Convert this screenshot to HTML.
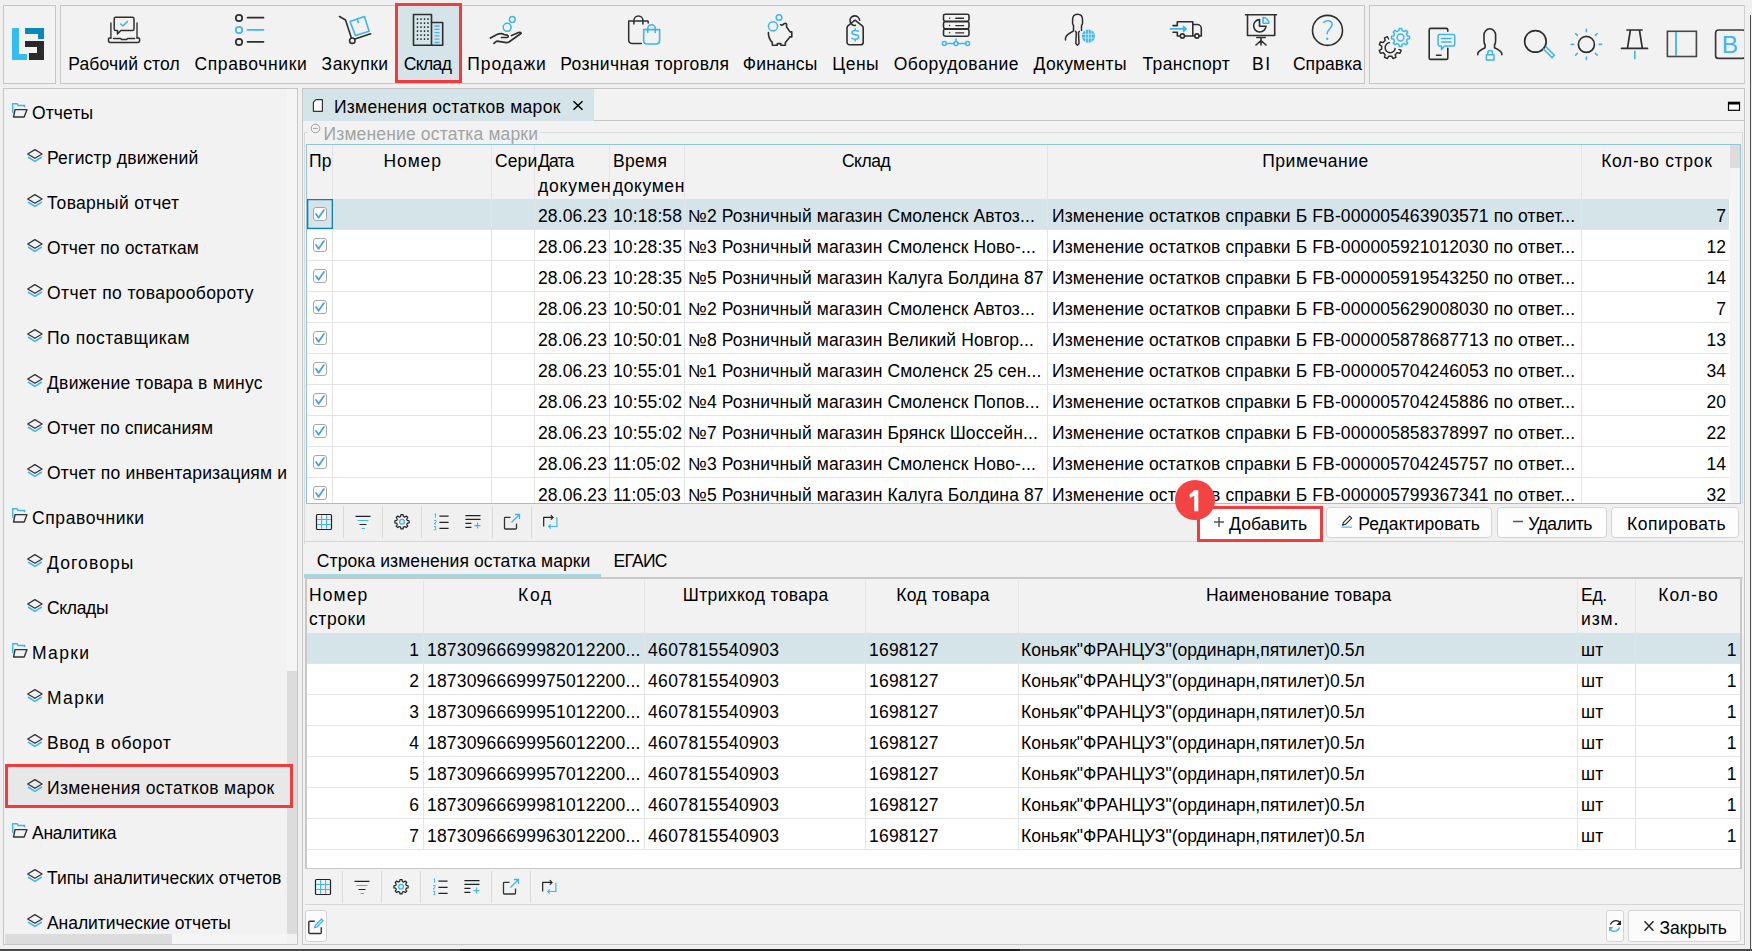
<!DOCTYPE html>
<html><head><meta charset="utf-8"><style>
html,body{margin:0;padding:0;}
body{width:1752px;height:951px;position:relative;overflow:hidden;background:#f0f0f0;font-family:"Liberation Sans",sans-serif;font-size:17.5px;color:#000;line-height:20px;letter-spacing:0.12px;}
.t{position:absolute;white-space:nowrap;line-height:20px;}
.b{position:absolute;}
.cb{width:14px;height:14px;border:1px solid #a6a6a6;border-radius:3px;background:#fff;box-sizing:border-box;}
svg.ic{position:absolute;left:0;top:0;width:1752px;height:951px;pointer-events:none;}
</style></head><body>
<div class="b" style="left:3px;top:5px;width:53px;height:79px;background:#f2f2f2;border:1px solid #c6c6c6;box-sizing:border-box;"></div>
<div class="b" style="left:60px;top:5px;width:1305px;height:79px;background:#f2f2f2;border:1px solid #c6c6c6;box-sizing:border-box;"></div>
<div class="b" style="left:1369px;top:5px;width:376px;height:79px;background:#f2f2f2;border:1px solid #c6c6c6;box-sizing:border-box;"></div>
<div class="b" style="left:395px;top:3px;width:67px;height:80px;background:#d4e4e9;border:3px solid #f03c3c;box-sizing:border-box;"></div>
<div class="t" style="top:53.5px;left:124.1px;width:0;display:flex;justify-content:center;white-space:nowrap;letter-spacing:0.16px;">Рабочий стол</div>
<div class="t" style="top:53.5px;left:250.9px;width:0;display:flex;justify-content:center;white-space:nowrap;letter-spacing:0.63px;">Справочники</div>
<div class="t" style="top:53.5px;left:355.1px;width:0;display:flex;justify-content:center;white-space:nowrap;letter-spacing:0.45px;">Закупки</div>
<div class="t" style="top:53.5px;left:427.5px;width:0;display:flex;justify-content:center;white-space:nowrap;letter-spacing:-0.6px;">Склад</div>
<div class="t" style="top:53.5px;left:507.0px;width:0;display:flex;justify-content:center;white-space:nowrap;letter-spacing:0.92px;">Продажи</div>
<div class="t" style="top:53.5px;left:644.8px;width:0;display:flex;justify-content:center;white-space:nowrap;letter-spacing:0.38px;">Розничная торговля</div>
<div class="t" style="top:53.5px;left:780.1px;width:0;display:flex;justify-content:center;white-space:nowrap;letter-spacing:0.17px;">Финансы</div>
<div class="t" style="top:53.5px;left:855.7px;width:0;display:flex;justify-content:center;white-space:nowrap;letter-spacing:0.53px;">Цены</div>
<div class="t" style="top:53.5px;left:956.3px;width:0;display:flex;justify-content:center;white-space:nowrap;letter-spacing:0.52px;">Оборудование</div>
<div class="t" style="top:53.5px;left:1080.2px;width:0;display:flex;justify-content:center;white-space:nowrap;letter-spacing:0.35px;">Документы</div>
<div class="t" style="top:53.5px;left:1186.3px;width:0;display:flex;justify-content:center;white-space:nowrap;letter-spacing:0.4px;">Транспорт</div>
<div class="t" style="top:53.5px;left:1261.8px;width:0;display:flex;justify-content:center;white-space:nowrap;letter-spacing:1.5px;">BI</div>
<div class="t" style="top:53.5px;left:1327.5px;width:0;display:flex;justify-content:center;white-space:nowrap;letter-spacing:0.08px;">Справка</div>
<div class="b" style="left:3px;top:88px;width:295px;height:857px;background:#f2f2f2;border:1px solid #c6c6c6;box-sizing:border-box;"></div>
<div class="b" style="left:287px;top:89px;width:10px;height:845px;background:#f5f5f5;"></div>
<div class="b" style="left:287px;top:671px;width:10px;height:263px;background:#dcdcdc;"></div>
<div class="b" style="left:4px;top:934px;width:283px;height:10px;background:#f5f5f5;"></div>
<div class="b" style="left:5px;top:934px;width:167px;height:10px;background:#dcdcdc;"></div>
<div class="b" style="left:5px;top:764px;width:288px;height:44px;background:#e8e8e8;border:3px solid #f03c3c;box-sizing:border-box;"></div>
<div class="t" style="top:103.4px;left:32.0px;white-space:nowrap;letter-spacing:0.120px;">Отчеты</div>
<div class="t" style="top:148.4px;left:47.0px;white-space:nowrap;letter-spacing:0.207px;">Регистр движений</div>
<div class="t" style="top:193.4px;left:47.0px;white-space:nowrap;letter-spacing:0.297px;">Товарный отчет</div>
<div class="t" style="top:238.4px;left:47.0px;white-space:nowrap;letter-spacing:0.089px;">Отчет по остаткам</div>
<div class="t" style="top:283.4px;left:47.0px;white-space:nowrap;letter-spacing:0.396px;">Отчет по товарообороту</div>
<div class="t" style="top:328.4px;left:47.0px;white-space:nowrap;letter-spacing:0.505px;">По поставщикам</div>
<div class="t" style="top:373.4px;left:47.0px;white-space:nowrap;letter-spacing:0.247px;">Движение товара в минус</div>
<div class="t" style="top:418.4px;left:47.0px;white-space:nowrap;letter-spacing:0.096px;">Отчет по списаниям</div>
<div class="t" style="top:463.4px;left:47.0px;white-space:nowrap;letter-spacing:0.180px;">Отчет по инвентаризациям и</div>
<div class="t" style="top:508.4px;left:32.0px;white-space:nowrap;letter-spacing:0.610px;">Справочники</div>
<div class="t" style="top:553.4px;left:47.0px;white-space:nowrap;letter-spacing:1.106px;">Договоры</div>
<div class="t" style="top:598.4px;left:47.0px;white-space:nowrap;letter-spacing:-0.340px;">Склады</div>
<div class="t" style="top:643.4px;left:32.0px;white-space:nowrap;letter-spacing:1.345px;">Марки</div>
<div class="t" style="top:688.4px;left:47.0px;white-space:nowrap;letter-spacing:1.345px;">Марки</div>
<div class="t" style="top:733.4px;left:47.0px;white-space:nowrap;letter-spacing:0.662px;">Ввод в оборот</div>
<div class="t" style="top:778.4px;left:47.0px;white-space:nowrap;letter-spacing:0.320px;">Изменения остатков марок</div>
<div class="t" style="top:823.4px;left:32.0px;white-space:nowrap;letter-spacing:-0.255px;">Аналитика</div>
<div class="t" style="top:868.4px;left:47.0px;white-space:nowrap;letter-spacing:-0.016px;">Типы аналитических отчетов</div>
<div class="t" style="top:913.4px;left:47.0px;white-space:nowrap;letter-spacing:-0.048px;">Аналитические отчеты</div>
<div class="b" style="left:302px;top:88px;width:1443px;height:857px;background:#f2f2f2;border:1px solid #c6c6c6;box-sizing:border-box;"></div>
<div class="b" style="left:303px;top:89px;width:1441px;height:32px;background:#f2f2f2;"></div>
<div class="b" style="left:303px;top:120px;width:1441px;height:1px;background:#c6c6c6;"></div>
<div class="b" style="left:303px;top:89px;width:291px;height:32px;background:#d4e4e9;"></div>
<div class="t" style="top:96.9px;letter-spacing:0.286px;left:333.9px;white-space:nowrap;">Изменения остатков марок</div>
<div class="b" style="left:304px;top:132px;width:1439px;height:412px;border:1px solid #dadada;box-sizing:border-box;border-bottom:none;"></div>
<div class="b" style="left:308px;top:124px;width:232px;height:16px;background:#f2f2f2;"></div>
<div class="t" style="top:123.9px;letter-spacing:0.156px;left:323.5px;color:#a3a3a3;white-space:nowrap;">Изменение остатка марки</div>
<div class="b" style="left:306px;top:144px;width:1435px;height:360px;background:#fff;border:1px solid #8fc6de;box-sizing:border-box;"></div>
<div class="b" style="left:307px;top:145px;width:1423px;height:54px;background:#f2f2f2;"></div>
<div class="b" style="left:307px;top:199px;width:1422px;height:31px;background:#d4e4e9;"></div>
<div class="b" style="left:307px;top:229px;width:1422px;height:1px;background:#e4e4e4;"></div>
<div class="b" style="left:307px;top:260px;width:1422px;height:1px;background:#e4e4e4;"></div>
<div class="b" style="left:307px;top:291px;width:1422px;height:1px;background:#e4e4e4;"></div>
<div class="b" style="left:307px;top:322px;width:1422px;height:1px;background:#e4e4e4;"></div>
<div class="b" style="left:307px;top:353px;width:1422px;height:1px;background:#e4e4e4;"></div>
<div class="b" style="left:307px;top:384px;width:1422px;height:1px;background:#e4e4e4;"></div>
<div class="b" style="left:307px;top:415px;width:1422px;height:1px;background:#e4e4e4;"></div>
<div class="b" style="left:307px;top:446px;width:1422px;height:1px;background:#e4e4e4;"></div>
<div class="b" style="left:307px;top:477px;width:1422px;height:1px;background:#e4e4e4;"></div>
<div class="b" style="left:332px;top:145px;width:1px;height:358px;background:#e4e4e4;"></div>
<div class="b" style="left:491px;top:145px;width:1px;height:358px;background:#e4e4e4;"></div>
<div class="b" style="left:534px;top:145px;width:1px;height:358px;background:#e4e4e4;"></div>
<div class="b" style="left:609px;top:145px;width:1px;height:358px;background:#e4e4e4;"></div>
<div class="b" style="left:684px;top:145px;width:1px;height:358px;background:#e4e4e4;"></div>
<div class="b" style="left:1047px;top:145px;width:1px;height:358px;background:#e4e4e4;"></div>
<div class="b" style="left:1581px;top:145px;width:1px;height:358px;background:#e4e4e4;"></div>
<div class="b" style="left:1730px;top:145px;width:10px;height:358px;background:#f5f5f5;"></div>
<div class="b" style="left:1730px;top:145px;width:10px;height:23px;background:#dcdcdc;"></div>
<div class="t" style="top:150.9px;left:309.0px;width:23px;overflow:hidden;white-space:nowrap;">Пр</div>
<div class="t" style="top:150.9px;letter-spacing:0.870px;left:412.7px;width:0;display:flex;justify-content:center;white-space:nowrap;">Номер</div>
<div class="t" style="top:150.9px;left:495.0px;white-space:nowrap;">Сери</div>
<div class="t" style="top:150.9px;letter-spacing:-0.813px;left:538.0px;white-space:nowrap;">Дата</div>
<div class="t" style="top:175.9px;letter-spacing:0.820px;left:538.0px;white-space:nowrap;">докумен</div>
<div class="t" style="top:150.9px;letter-spacing:0.320px;left:613.0px;white-space:nowrap;">Время</div>
<div class="t" style="top:175.9px;letter-spacing:0.586px;left:613.0px;white-space:nowrap;">докумен</div>
<div class="t" style="top:150.9px;letter-spacing:-0.480px;left:866.0px;width:0;display:flex;justify-content:center;white-space:nowrap;">Склад</div>
<div class="t" style="top:150.9px;letter-spacing:0.519px;left:1315.5px;width:0;display:flex;justify-content:center;white-space:nowrap;">Примечание</div>
<div class="t" style="top:150.9px;letter-spacing:0.683px;left:1656.8px;width:0;display:flex;justify-content:center;white-space:nowrap;">Кол-во строк</div>
<div class="b" style="left:307px;top:199px;width:26px;height:30px;border:1px solid #0f7cb3;box-sizing:border-box;box-shadow:inset 0 0 0 0.3px #0f7cb3;"></div>
<div class="b cb" style="left:313px;top:207px;"></div>
<div class="t" style="top:206.4px;left:538.0px;white-space:nowrap;">28.06.23</div>
<div class="t" style="top:206.4px;left:613.0px;white-space:nowrap;">10:18:58</div>
<div class="t" style="top:206.4px;left:688.0px;white-space:nowrap;">№2 Розничный магазин Смоленск Автоз...</div>
<div class="t" style="top:206.4px;left:1052.0px;white-space:nowrap;">Изменение остатков справки Б FB-000005463903571 по ответ...</div>
<div class="t" style="top:206.4px;right:25.9px;white-space:nowrap;">7</div>
<div class="b cb" style="left:313px;top:238px;"></div>
<div class="t" style="top:237.4px;left:538.0px;white-space:nowrap;">28.06.23</div>
<div class="t" style="top:237.4px;left:613.0px;white-space:nowrap;">10:28:35</div>
<div class="t" style="top:237.4px;left:688.0px;white-space:nowrap;">№3 Розничный магазин Смоленск Ново-...</div>
<div class="t" style="top:237.4px;left:1052.0px;white-space:nowrap;">Изменение остатков справки Б FB-000005921012030 по ответ...</div>
<div class="t" style="top:237.4px;right:25.9px;white-space:nowrap;">12</div>
<div class="b cb" style="left:313px;top:269px;"></div>
<div class="t" style="top:268.4px;left:538.0px;white-space:nowrap;">28.06.23</div>
<div class="t" style="top:268.4px;left:613.0px;white-space:nowrap;">10:28:35</div>
<div class="t" style="top:268.4px;left:688.0px;white-space:nowrap;">№5 Розничный магазин Калуга Болдина 87</div>
<div class="t" style="top:268.4px;left:1052.0px;white-space:nowrap;">Изменение остатков справки Б FB-000005919543250 по ответ...</div>
<div class="t" style="top:268.4px;right:25.9px;white-space:nowrap;">14</div>
<div class="b cb" style="left:313px;top:300px;"></div>
<div class="t" style="top:299.4px;left:538.0px;white-space:nowrap;">28.06.23</div>
<div class="t" style="top:299.4px;left:613.0px;white-space:nowrap;">10:50:01</div>
<div class="t" style="top:299.4px;left:688.0px;white-space:nowrap;">№2 Розничный магазин Смоленск Автоз...</div>
<div class="t" style="top:299.4px;left:1052.0px;white-space:nowrap;">Изменение остатков справки Б FB-000005629008030 по ответ...</div>
<div class="t" style="top:299.4px;right:25.9px;white-space:nowrap;">7</div>
<div class="b cb" style="left:313px;top:331px;"></div>
<div class="t" style="top:330.4px;left:538.0px;white-space:nowrap;">28.06.23</div>
<div class="t" style="top:330.4px;left:613.0px;white-space:nowrap;">10:50:01</div>
<div class="t" style="top:330.4px;left:688.0px;white-space:nowrap;">№8 Розничный магазин Великий Новгор...</div>
<div class="t" style="top:330.4px;left:1052.0px;white-space:nowrap;">Изменение остатков справки Б FB-000005878687713 по ответ...</div>
<div class="t" style="top:330.4px;right:25.9px;white-space:nowrap;">13</div>
<div class="b cb" style="left:313px;top:362px;"></div>
<div class="t" style="top:361.4px;left:538.0px;white-space:nowrap;">28.06.23</div>
<div class="t" style="top:361.4px;left:613.0px;white-space:nowrap;">10:55:01</div>
<div class="t" style="top:361.4px;left:688.0px;white-space:nowrap;">№1 Розничный магазин Смоленск 25 сен...</div>
<div class="t" style="top:361.4px;left:1052.0px;white-space:nowrap;">Изменение остатков справки Б FB-000005704246053 по ответ...</div>
<div class="t" style="top:361.4px;right:25.9px;white-space:nowrap;">34</div>
<div class="b cb" style="left:313px;top:393px;"></div>
<div class="t" style="top:392.4px;left:538.0px;white-space:nowrap;">28.06.23</div>
<div class="t" style="top:392.4px;left:613.0px;white-space:nowrap;">10:55:02</div>
<div class="t" style="top:392.4px;left:688.0px;white-space:nowrap;">№4 Розничный магазин Смоленск Попов...</div>
<div class="t" style="top:392.4px;left:1052.0px;white-space:nowrap;">Изменение остатков справки Б FB-000005704245886 по ответ...</div>
<div class="t" style="top:392.4px;right:25.9px;white-space:nowrap;">20</div>
<div class="b cb" style="left:313px;top:424px;"></div>
<div class="t" style="top:423.4px;left:538.0px;white-space:nowrap;">28.06.23</div>
<div class="t" style="top:423.4px;left:613.0px;white-space:nowrap;">10:55:02</div>
<div class="t" style="top:423.4px;left:688.0px;white-space:nowrap;">№7 Розничный магазин Брянск Шоссейн...</div>
<div class="t" style="top:423.4px;left:1052.0px;white-space:nowrap;">Изменение остатков справки Б FB-000005858378997 по ответ...</div>
<div class="t" style="top:423.4px;right:25.9px;white-space:nowrap;">22</div>
<div class="b cb" style="left:313px;top:455px;"></div>
<div class="t" style="top:454.4px;left:538.0px;white-space:nowrap;">28.06.23</div>
<div class="t" style="top:454.4px;left:613.0px;white-space:nowrap;">11:05:02</div>
<div class="t" style="top:454.4px;left:688.0px;white-space:nowrap;">№3 Розничный магазин Смоленск Ново-...</div>
<div class="t" style="top:454.4px;left:1052.0px;white-space:nowrap;">Изменение остатков справки Б FB-000005704245757 по ответ...</div>
<div class="t" style="top:454.4px;right:25.9px;white-space:nowrap;">14</div>
<div class="b cb" style="left:313px;top:486px;"></div>
<div class="t" style="top:485.4px;left:538.0px;white-space:nowrap;">28.06.23</div>
<div class="t" style="top:485.4px;left:613.0px;white-space:nowrap;">11:05:03</div>
<div class="t" style="top:485.4px;left:688.0px;white-space:nowrap;">№5 Розничный магазин Калуга Болдина 87</div>
<div class="t" style="top:485.4px;left:1052.0px;white-space:nowrap;">Изменение остатков справки Б FB-000005799367341 по ответ...</div>
<div class="t" style="top:485.4px;right:25.9px;white-space:nowrap;">32</div>
<div class="b" style="left:306px;top:503px;width:1435px;height:1px;background:#8fc6de;"></div>
<div class="b" style="left:305px;top:504px;width:1438px;height:38px;background:#f0f0f0;"></div>
<div class="b" style="left:305px;top:541px;width:1438px;height:1px;background:#d6d6d6;"></div>
<div class="b" style="left:343px;top:506px;width:1px;height:32px;background:#d9d9d9;"></div>
<div class="b" style="left:382px;top:506px;width:1px;height:32px;background:#d9d9d9;"></div>
<div class="b" style="left:421px;top:506px;width:1px;height:32px;background:#d9d9d9;"></div>
<div class="b" style="left:492px;top:506px;width:1px;height:32px;background:#d9d9d9;"></div>
<div class="b" style="left:531px;top:506px;width:1px;height:32px;background:#d9d9d9;"></div>
<div class="b" style="left:1326px;top:507px;width:166px;height:31px;background:#fdfdfd;border:1px solid #d4d4d4;box-sizing:border-box;border-radius:4px;"></div>
<div class="t" style="top:513.9px;letter-spacing:0.071px;left:1358.2px;white-space:nowrap;">Редактировать</div>
<div class="b" style="left:1497px;top:507px;width:110px;height:31px;background:#fdfdfd;border:1px solid #d4d4d4;box-sizing:border-box;border-radius:4px;"></div>
<div class="t" style="top:513.9px;letter-spacing:-0.448px;left:1528.3px;white-space:nowrap;">Удалить</div>
<div class="b" style="left:1611px;top:507px;width:128px;height:31px;background:#fdfdfd;border:1px solid #d4d4d4;box-sizing:border-box;border-radius:4px;"></div>
<div class="t" style="top:513.9px;letter-spacing:0.497px;left:1627.0px;white-space:nowrap;">Копировать</div>
<div class="b" style="left:1197px;top:506px;width:126px;height:36px;background:#fff;border:3px solid #f03c3c;box-sizing:border-box;"></div>
<div class="t" style="top:513.9px;letter-spacing:0.120px;left:1229.0px;white-space:nowrap;">Добавить</div>
<div class="b" style="left:1175px;top:480px;width:39.7px;height:39.7px;border-radius:50%;background:#f44343;"></div>
<svg class="b" style="left:0;top:0;" width="1752" height="951"><path d="M1194.3 490.2h4v21.1h-4.1v-15.6l-4.3 2.4-.4-3.7z" fill="#fff"/></svg>
<div class="t" style="top:551.2px;letter-spacing:0.099px;left:316.8px;white-space:nowrap;">Строка изменения остатка марки</div>
<div class="t" style="top:551.2px;letter-spacing:-0.730px;left:613.5px;white-space:nowrap;">ЕГАИС</div>
<div class="b" style="left:304px;top:574px;width:297px;height:3px;background:#a9d5de;"></div>
<div class="b" style="left:304px;top:577px;width:1439px;height:1px;background:#c9c9c9;"></div>
<div class="b" style="left:305px;top:578px;width:1437px;height:291px;background:#fff;border:2px solid #c8c8c8;box-sizing:border-box;border-top-width:1px;border-bottom-width:1px;border-right-width:2px;"></div>
<div class="b" style="left:307px;top:579px;width:1433px;height:54px;background:#f2f2f2;"></div>
<div class="b" style="left:307px;top:633px;width:1433px;height:31px;background:#d4e4e9;"></div>
<div class="b" style="left:307px;top:663px;width:1433px;height:1px;background:#e4e4e4;"></div>
<div class="b" style="left:307px;top:694px;width:1433px;height:1px;background:#e4e4e4;"></div>
<div class="b" style="left:307px;top:725px;width:1433px;height:1px;background:#e4e4e4;"></div>
<div class="b" style="left:307px;top:756px;width:1433px;height:1px;background:#e4e4e4;"></div>
<div class="b" style="left:307px;top:787px;width:1433px;height:1px;background:#e4e4e4;"></div>
<div class="b" style="left:307px;top:818px;width:1433px;height:1px;background:#e4e4e4;"></div>
<div class="b" style="left:307px;top:849px;width:1433px;height:1px;background:#e4e4e4;"></div>
<div class="b" style="left:423px;top:580px;width:1px;height:270px;background:#e4e4e4;"></div>
<div class="b" style="left:644px;top:580px;width:1px;height:270px;background:#e4e4e4;"></div>
<div class="b" style="left:865px;top:580px;width:1px;height:270px;background:#e4e4e4;"></div>
<div class="b" style="left:1018px;top:580px;width:1px;height:270px;background:#e4e4e4;"></div>
<div class="b" style="left:1577px;top:580px;width:1px;height:270px;background:#e4e4e4;"></div>
<div class="b" style="left:1635px;top:580px;width:1px;height:270px;background:#e4e4e4;"></div>
<div class="t" style="top:584.9px;letter-spacing:1.120px;left:309.0px;white-space:nowrap;">Номер</div>
<div class="t" style="top:609.3px;letter-spacing:0.560px;left:309.0px;white-space:nowrap;">строки</div>
<div class="t" style="top:584.9px;letter-spacing:1.720px;left:535.5px;width:0;display:flex;justify-content:center;white-space:nowrap;">Код</div>
<div class="t" style="top:584.9px;letter-spacing:0.349px;left:755.7px;width:0;display:flex;justify-content:center;white-space:nowrap;">Штрихкод товара</div>
<div class="t" style="top:584.9px;letter-spacing:0.321px;left:943.0px;width:0;display:flex;justify-content:center;white-space:nowrap;">Код товара</div>
<div class="t" style="top:584.9px;letter-spacing:0.187px;left:1298.7px;width:0;display:flex;justify-content:center;white-space:nowrap;">Наименование товара</div>
<div class="t" style="top:584.9px;letter-spacing:-0.280px;left:1581.0px;white-space:nowrap;">Ед.</div>
<div class="t" style="top:609.3px;letter-spacing:0.853px;left:1581.0px;white-space:nowrap;">изм.</div>
<div class="t" style="top:584.9px;letter-spacing:1.000px;left:1688.5px;width:0;display:flex;justify-content:center;white-space:nowrap;">Кол-во</div>
<div class="t" style="top:639.5px;right:1332.9px;white-space:nowrap;">1</div>
<div class="t" style="top:639.5px;left:427.0px;white-space:nowrap;letter-spacing:0.19px;">18730966699982012200...</div>
<div class="t" style="top:639.5px;left:648.0px;white-space:nowrap;letter-spacing:0.37px;">4607815540903</div>
<div class="t" style="top:639.5px;left:869.0px;white-space:nowrap;letter-spacing:0.22px;">1698127</div>
<div class="t" style="top:639.5px;left:1021.0px;white-space:nowrap;letter-spacing:0.0px;">Коньяк"ФРАНЦУЗ"(ординарн,пятилет)0.5л</div>
<div class="t" style="top:639.5px;left:1581.0px;white-space:nowrap;">шт</div>
<div class="t" style="top:639.5px;right:15.4px;white-space:nowrap;">1</div>
<div class="t" style="top:670.5px;right:1332.9px;white-space:nowrap;">2</div>
<div class="t" style="top:670.5px;left:427.0px;white-space:nowrap;letter-spacing:0.19px;">18730966699975012200...</div>
<div class="t" style="top:670.5px;left:648.0px;white-space:nowrap;letter-spacing:0.37px;">4607815540903</div>
<div class="t" style="top:670.5px;left:869.0px;white-space:nowrap;letter-spacing:0.22px;">1698127</div>
<div class="t" style="top:670.5px;left:1021.0px;white-space:nowrap;letter-spacing:0.0px;">Коньяк"ФРАНЦУЗ"(ординарн,пятилет)0.5л</div>
<div class="t" style="top:670.5px;left:1581.0px;white-space:nowrap;">шт</div>
<div class="t" style="top:670.5px;right:15.4px;white-space:nowrap;">1</div>
<div class="t" style="top:701.5px;right:1332.9px;white-space:nowrap;">3</div>
<div class="t" style="top:701.5px;left:427.0px;white-space:nowrap;letter-spacing:0.19px;">18730966699951012200...</div>
<div class="t" style="top:701.5px;left:648.0px;white-space:nowrap;letter-spacing:0.37px;">4607815540903</div>
<div class="t" style="top:701.5px;left:869.0px;white-space:nowrap;letter-spacing:0.22px;">1698127</div>
<div class="t" style="top:701.5px;left:1021.0px;white-space:nowrap;letter-spacing:0.0px;">Коньяк"ФРАНЦУЗ"(ординарн,пятилет)0.5л</div>
<div class="t" style="top:701.5px;left:1581.0px;white-space:nowrap;">шт</div>
<div class="t" style="top:701.5px;right:15.4px;white-space:nowrap;">1</div>
<div class="t" style="top:732.5px;right:1332.9px;white-space:nowrap;">4</div>
<div class="t" style="top:732.5px;left:427.0px;white-space:nowrap;letter-spacing:0.19px;">18730966699956012200...</div>
<div class="t" style="top:732.5px;left:648.0px;white-space:nowrap;letter-spacing:0.37px;">4607815540903</div>
<div class="t" style="top:732.5px;left:869.0px;white-space:nowrap;letter-spacing:0.22px;">1698127</div>
<div class="t" style="top:732.5px;left:1021.0px;white-space:nowrap;letter-spacing:0.0px;">Коньяк"ФРАНЦУЗ"(ординарн,пятилет)0.5л</div>
<div class="t" style="top:732.5px;left:1581.0px;white-space:nowrap;">шт</div>
<div class="t" style="top:732.5px;right:15.4px;white-space:nowrap;">1</div>
<div class="t" style="top:763.5px;right:1332.9px;white-space:nowrap;">5</div>
<div class="t" style="top:763.5px;left:427.0px;white-space:nowrap;letter-spacing:0.19px;">18730966699957012200...</div>
<div class="t" style="top:763.5px;left:648.0px;white-space:nowrap;letter-spacing:0.37px;">4607815540903</div>
<div class="t" style="top:763.5px;left:869.0px;white-space:nowrap;letter-spacing:0.22px;">1698127</div>
<div class="t" style="top:763.5px;left:1021.0px;white-space:nowrap;letter-spacing:0.0px;">Коньяк"ФРАНЦУЗ"(ординарн,пятилет)0.5л</div>
<div class="t" style="top:763.5px;left:1581.0px;white-space:nowrap;">шт</div>
<div class="t" style="top:763.5px;right:15.4px;white-space:nowrap;">1</div>
<div class="t" style="top:794.5px;right:1332.9px;white-space:nowrap;">6</div>
<div class="t" style="top:794.5px;left:427.0px;white-space:nowrap;letter-spacing:0.19px;">18730966699981012200...</div>
<div class="t" style="top:794.5px;left:648.0px;white-space:nowrap;letter-spacing:0.37px;">4607815540903</div>
<div class="t" style="top:794.5px;left:869.0px;white-space:nowrap;letter-spacing:0.22px;">1698127</div>
<div class="t" style="top:794.5px;left:1021.0px;white-space:nowrap;letter-spacing:0.0px;">Коньяк"ФРАНЦУЗ"(ординарн,пятилет)0.5л</div>
<div class="t" style="top:794.5px;left:1581.0px;white-space:nowrap;">шт</div>
<div class="t" style="top:794.5px;right:15.4px;white-space:nowrap;">1</div>
<div class="t" style="top:825.5px;right:1332.9px;white-space:nowrap;">7</div>
<div class="t" style="top:825.5px;left:427.0px;white-space:nowrap;letter-spacing:0.19px;">18730966699963012200...</div>
<div class="t" style="top:825.5px;left:648.0px;white-space:nowrap;letter-spacing:0.37px;">4607815540903</div>
<div class="t" style="top:825.5px;left:869.0px;white-space:nowrap;letter-spacing:0.22px;">1698127</div>
<div class="t" style="top:825.5px;left:1021.0px;white-space:nowrap;letter-spacing:0.0px;">Коньяк"ФРАНЦУЗ"(ординарн,пятилет)0.5л</div>
<div class="t" style="top:825.5px;left:1581.0px;white-space:nowrap;">шт</div>
<div class="t" style="top:825.5px;right:15.4px;white-space:nowrap;">1</div>
<div class="b" style="left:305px;top:904px;width:1438px;height:1px;background:#d6d6d6;"></div>
<div class="b" style="left:342px;top:871px;width:1px;height:32px;background:#d9d9d9;"></div>
<div class="b" style="left:381px;top:871px;width:1px;height:32px;background:#d9d9d9;"></div>
<div class="b" style="left:420px;top:871px;width:1px;height:32px;background:#d9d9d9;"></div>
<div class="b" style="left:491px;top:871px;width:1px;height:32px;background:#d9d9d9;"></div>
<div class="b" style="left:530px;top:871px;width:1px;height:32px;background:#d9d9d9;"></div>
<div class="b" style="left:305px;top:910px;width:22px;height:32px;background:#fbfbfb;border:1px solid #d4d4d4;box-sizing:border-box;border-radius:3px;"></div>
<div class="b" style="left:1606px;top:910px;width:18px;height:32px;background:#fbfbfb;border:1px solid #d4d4d4;box-sizing:border-box;border-radius:3px;"></div>
<div class="b" style="left:1628px;top:910px;width:113px;height:32px;background:#fbfbfb;border:1px solid #d4d4d4;box-sizing:border-box;border-radius:3px;"></div>
<div class="t" style="top:918.2px;letter-spacing:-0.014px;left:1659.5px;white-space:nowrap;">Закрыть</div>
<div class="b" style="left:0px;top:949px;width:1752px;height:2px;background:#4a4a4a;"></div>
<div class="b" style="left:460px;top:949px;width:560px;height:2px;background:#1e1e1e;"></div>
<div class="b" style="left:1750px;top:15px;width:1px;height:936px;background:#505050;"></div>
<svg class="ic" width="1752" height="951" viewBox="0 0 1752 951"><g shape-rendering="crispEdges"><path d="M12 28h7v25.5h8V60H12z" fill="#33bdf2"/><path d="M25 28h19v10.5h-6V34H25z" fill="#0a87bd"/><path d="M25 41h19v19H29v-6.8h8.2v-6H25z" fill="#2a2a2a"/></g><g fill="none" stroke="#4a4a4a" stroke-width="1.6" stroke-linecap="round" stroke-linejoin="round"><path d="M110.9 23v15M137 23v15"/></g><g fill="none" stroke="#2e2e2e" stroke-width="1.5" stroke-linecap="round" stroke-linejoin="round"><path d="M110.8 38.1H109.3a.8.8 0 0 0-.8.8V40.8Q108.5 42.5 110.4 42.5H137.7Q139.6 42.5 139.6 40.8V38.9a.8.8 0 0 0-.8-.8H137M113.5 38.5H120.6L121.6 39.6H126.6L127.6 38.5H134.6"/><path d="M115.8 17.2h16.6a1.6 1.6 0 0 1 1.6 1.6v10.2a1.6 1.6 0 0 1-1.6 1.6h-11.6l-3.3 3.4v-3.4h-1.7a1.6 1.6 0 0 1-1.6-1.6V18.8a1.6 1.6 0 0 1 1.6-1.6z"/></g><g fill="none" stroke="#3cb7ee" stroke-width="1.6" stroke-linecap="round" stroke-linejoin="round"><path d="M120.8 24l2.1 2 4.4-4.4"/></g><g fill="none" stroke="#2e2e2e" stroke-width="1.7" stroke-linecap="round" stroke-linejoin="round"><circle cx="239" cy="18" r="3.2"/><circle cx="239" cy="42" r="3.2"/><path d="M247.5 17.7h16M247.5 41.8h16"/></g><g fill="none" stroke="#3cb7ee" stroke-width="1.7" stroke-linecap="round" stroke-linejoin="round"><circle cx="239" cy="30" r="3.2"/><path d="M247.5 29.9h16"/></g><g fill="none" stroke="#2e2e2e" stroke-width="1.6" stroke-linecap="round" stroke-linejoin="round"><path d="M339.5 16.5l6 3.5 6 18.2"/><circle cx="352.3" cy="40.7" r="2.7"/><path d="M355 39l15.7-5.2"/></g><g fill="none" stroke="#3cb7ee" stroke-width="1.6" stroke-linecap="round" stroke-linejoin="round"><path d="M350 21.5l14.5-5 4.6 14.7-13.6 4.4z"/><path d="M357.3 19l1 3.5"/></g><g fill="none" stroke="#2e2e2e" stroke-width="1.6" stroke-linecap="round" stroke-linejoin="round"><path d="M413.5 14.5h18v30.8h-18z"/><path d="M431.5 22.5h11.2v22.8h-11.2"/></g><path d="M417.5 18.2v1.8 M421.0 18.2v1.8 M424.5 18.2v1.8 M428.0 18.2v1.8 M417.5 22.2v1.8 M421.0 22.2v1.8 M424.5 22.2v1.8 M428.0 22.2v1.8 M417.5 26.2v1.8 M421.0 26.2v1.8 M424.5 26.2v1.8 M428.0 26.2v1.8 M417.5 30.2v1.8 M421.0 30.2v1.8 M424.5 30.2v1.8 M428.0 30.2v1.8 M417.5 34.2v1.8 M421.0 34.2v1.8 M424.5 34.2v1.8 M428.0 34.2v1.8 M417.5 38.2v1.8 M421.0 38.2v1.8 M424.5 38.2v1.8 M428.0 38.2v1.8" stroke="#2e2e2e" stroke-width="1.4" fill="none"/><path d="M434.5 26.0h5 M434.5 29.3h5 M434.5 32.6h5 M434.5 35.9h5 M434.5 39.2h5 M434.5 42.5h5" stroke="#3cb7ee" stroke-width="1.3" fill="none"/><g fill="none" stroke="#3cb7ee" stroke-width="1.5" stroke-linecap="round" stroke-linejoin="round"><circle cx="512.3" cy="19.5" r="2.9"/><circle cx="507.2" cy="27.3" r="4"/></g><g fill="none" stroke="#2e2e2e" stroke-width="1.7" stroke-linecap="round" stroke-linejoin="round"><path d="M490.4 38.1L497.5 34.2Q499 33.6 501.2 33.7Q502.8 33.9 504 34.5L507.2 35.2Q508.6 35.9 508 37Q507.5 37.5 506.5 37.5H501.5M511.5 35.5L518.6 32.5Q520.3 32 521.2 33.3L509 42Q508 42.6 506.4 42.6L497 41.1Q496 41.1 494 43.4"/></g><g fill="none" stroke="#2e2e2e" stroke-width="1.5" stroke-linecap="round" stroke-linejoin="round"><path d="M641.4 43.4H632a3.3 3.3 0 0 1-3.3-3.3V21.1h19.1l.4.4v1.5"/><path d="M633.9 24.1v-3.6a4.5 4.5 0 0 1 9 0v3.6"/></g><g fill="none" stroke="#3cb7ee" stroke-width="1.6" stroke-linecap="round" stroke-linejoin="round"><path d="M643.7 29.6h15.9v11.2a3.2 3.2 0 0 1-3.2 3.2h-9.5a3.2 3.2 0 0 1-3.2-3.2z"/><path d="M647.8 32.4v-4a3.7 3.7 0 0 1 7.4 0v4"/></g><g fill="none" stroke="#3cb7ee" stroke-width="1.5" stroke-linecap="round" stroke-linejoin="round"><circle cx="779" cy="17.5" r="2.8"/><circle cx="773" cy="26.3" r="4.6"/></g><g fill="none" stroke="#2e2e2e" stroke-width="1.6" stroke-linecap="round" stroke-linejoin="round"><path d="M768.4 32.5C768.2 36.5 770 40 772.2 42.4L772.4 45.3H777.2L777.4 43.6H780.8L780.8 45.3H785.4V42.4L789.9 36.9H791.8V31.9H790L786.6 27V24.2Q786.5 23.3 785.5 23.3Q784 23.5 782.7 24.9Q781.8 25.4 780.6 24.6"/></g><g fill="none" stroke="#2e2e2e" stroke-width="1.6" stroke-linecap="round" stroke-linejoin="round"><path d="M855 20.2L862 25.6Q863.2 26.6 863.2 28V42.2A2.6 2.6 0 0 1 860.6 44.8H849.6A2.6 2.6 0 0 1 847 42.2V28Q847 26.6 848.2 25.6Z"/><path d="M859.6 20.3A4.8 4.8 0 1 0 855.4 25.4"/></g><g fill="none" stroke="#3cb7ee" stroke-width="1.5" stroke-linecap="round" stroke-linejoin="round"><path d="M855.2 28.8v1.6M855.2 39.3v1.6M858.4 31.3Q857.5 30.4 855.2 30.4Q852 30.4 852 32.6Q852 34.6 855.2 34.8Q858.6 35 858.6 37Q858.6 39.2 855.2 39.2Q852.8 39.2 851.8 38.3"/></g><g fill="none" stroke="#2e2e2e" stroke-width="1.6" stroke-linecap="round" stroke-linejoin="round"><rect x="943.5" y="14.2" width="25.5" height="7" rx="1.6"/><rect x="943.5" y="21.7" width="25.5" height="7" rx="1.6"/><rect x="943.5" y="29.2" width="25.5" height="7" rx="1.6"/></g><circle cx="949.6" cy="18.2" r="0.8" fill="#2e2e2e"/><circle cx="949.6" cy="25.5" r="0.8" fill="#2e2e2e"/><circle cx="949.6" cy="32.8" r="0.8" fill="#2e2e2e"/><path d="M955.8 18.3h7.8M955.8 25.6h7.8M955.8 32.9h7.8" stroke="#2e2e2e" stroke-width="1.4" stroke-linecap="round"/><g fill="none" stroke="#3cb7ee" stroke-width="1.5" stroke-linecap="round" stroke-linejoin="round"><path d="M946.3 43.4h7.7M958 43.4h7.6M956 39v2.4"/><circle cx="944.3" cy="43.4" r="2"/><circle cx="956" cy="43.4" r="2"/><circle cx="967.6" cy="43.4" r="2"/></g><g fill="none" stroke="#2e2e2e" stroke-width="1.5" stroke-linecap="round" stroke-linejoin="round"><path d="M1065.5 39.9V38Q1066 35.5 1068.5 34L1073.5 30.8V25.3Q1072.6 24.5 1072.6 23.4V19.5Q1072.6 14.2 1077.5 14.2Q1082.5 14.2 1082.5 19.5V23.4Q1082.5 24.5 1081.5 25.3V30.6"/><path d="M1075.4 31.3L1076.3 32.5L1075.8 43.6L1077.4 45.3L1079 43.6L1078.5 32.5L1079.3 31.3"/></g><circle cx="1088.4" cy="36.1" r="6.6" fill="#3cb7ee"/><path d="M1082 34.3h12.8M1082 37.9h12.8M1085.6 29.5v13.2M1088.4 29.5v13.2M1091.2 29.5v13.2" stroke="#f2f2f2" stroke-width="0.7" fill="none"/><g fill="none" stroke="#2e2e2e" stroke-width="1.6" stroke-linecap="round" stroke-linejoin="round"><path d="M1173 25.6h4.3v-3.8h15.5v14.2M1173 32.3h4.3V36h2.3M1184.5 36h10M1192.8 24.5h4.4a4.1 4.1 0 0 1 4.1 4.1V36h-2.1"/><circle cx="1182.4" cy="36" r="2.1"/><circle cx="1196.9" cy="36" r="2.1"/></g><g fill="none" stroke="#3cb7ee" stroke-width="1.7" stroke-linecap="round" stroke-linejoin="round"><path d="M1170.5 28.9h13"/></g><path d="M1183.3 25.8l3.6 3.1-3.6 3.1z" fill="#3cb7ee" stroke="#3cb7ee" stroke-width="1" stroke-linejoin="round"/><g fill="none" stroke="#2e2e2e" stroke-width="1.6" stroke-linecap="round" stroke-linejoin="round"><path d="M1245.5 14.8h31M1247.5 15v20.5h27.2V15"/><path d="M1261 38.5v6.5M1256.8 37.5h8.4M1256 45l5-4.5 5 4.5"/><path d="M1259.5 19.6a6.2 6.2 0 1 0 6.5 6.7h-6.5z"/></g><path d="M1263.1 17.5v5.8h5.8a5.8 5.8 0 0 0-5.8-5.8z" fill="none" stroke="#3cb7ee" stroke-width="1.6" stroke-linejoin="round"/><g fill="none" stroke="#2e2e2e" stroke-width="1.6" stroke-linecap="round" stroke-linejoin="round"><circle cx="1327.5" cy="30.4" r="15"/></g><g fill="none" stroke="#3cb7ee" stroke-width="1.6" stroke-linecap="round" stroke-linejoin="round"><path d="M1323.8 22.3c1-.9 2.4-1.5 4-1.5 2.6 0 4.3 1.6 4.3 3.8 0 3.3-4.7 4.8-5 9.2"/></g><circle cx="1327.2" cy="38.8" r="1.2" fill="#3cb7ee"/><path d="M1398.78 49.05L1401.13 50.48L1399.96 53.29L1397.29 52.64L1395.24 54.69L1395.89 57.36L1393.08 58.53L1391.65 56.18L1388.75 56.18L1387.32 58.53L1384.51 57.36L1385.16 54.69L1383.11 52.64L1380.44 53.29L1379.27 50.48L1381.62 49.05L1381.62 46.15L1379.27 44.72L1380.44 41.91L1383.11 42.56L1385.16 40.51L1384.51 37.84L1387.32 36.67L1388.75 39.02L1391.65 39.02L1393.08 36.67L1395.89 37.84L1395.24 40.51L1397.29 42.56L1399.96 41.91L1401.13 44.72L1398.78 46.15Z" fill="none" stroke="#2e2e2e" stroke-width="1.5" stroke-linejoin="round"/><path d="M1390.2 42.5A5.1 5.1 0 1 0 1395.3 47.6" fill="none" stroke="#2e2e2e" stroke-width="1.5"/><circle cx="1400.5" cy="37.5" r="11.6" fill="#f2f2f2"/><path d="M1398.94 30.68L1399.28 28.48L1401.72 28.48L1402.06 30.68L1404.22 31.57L1406.01 30.26L1407.74 31.99L1406.43 33.78L1407.32 35.94L1409.52 36.28L1409.52 38.72L1407.32 39.06L1406.43 41.22L1407.74 43.01L1406.01 44.74L1404.22 43.43L1402.06 44.32L1401.72 46.52L1399.28 46.52L1398.94 44.32L1396.78 43.43L1394.99 44.74L1393.26 43.01L1394.57 41.22L1393.68 39.06L1391.48 38.72L1391.48 36.28L1393.68 35.94L1394.57 33.78L1393.26 31.99L1394.99 30.26L1396.78 31.57Z" fill="#f2f2f2" stroke="#3cb7ee" stroke-width="1.5" stroke-linejoin="round"/><circle cx="1400.5" cy="37.5" r="3.4" fill="none" stroke="#3cb7ee" stroke-width="1.5"/><g fill="none" stroke="#2e2e2e" stroke-width="1.6" stroke-linecap="round" stroke-linejoin="round"><path d="M1447.8 31.2v-1.3a1.5 1.5 0 0 0-1.5-1.5h-15.6a1.5 1.5 0 0 0-1.5 1.5v28a1.5 1.5 0 0 0 1.5 1.5h15.6a1.5 1.5 0 0 0 1.5-1.5v-9.6M1436.5 55.2h4.5"/></g><g fill="none" stroke="#3cb7ee" stroke-width="1.5" stroke-linecap="round" stroke-linejoin="round"><path d="M1439.6 34.5h13.6a1.5 1.5 0 0 1 1.5 1.5v8.6a1.5 1.5 0 0 1-1.5 1.5h-8.6l-3.1 3.5v-3.5h-1.9a1.5 1.5 0 0 1-1.5-1.5V36a1.5 1.5 0 0 1 1.5-1.5zM1441.5 38.6h9.6M1441.5 42h9.6"/></g><g fill="none" stroke="#2e2e2e" stroke-width="1.6" stroke-linecap="round" stroke-linejoin="round"><path d="M1477.8 54.8v-1.3c0-1.6 3.5-3.9 7.3-5.8v-3c-1.1-1-1.1-2.5-1.1-4v-5.6c0-3.3 2.5-6.3 5.8-6.3s5.8 3 5.8 6.3v5.6c0 1.5 0 3-1.1 4v3c3.8 1.9 7.3 4.2 7.3 5.8v1.3"/></g><g fill="none" stroke="#3cb7ee" stroke-width="1.5" stroke-linecap="round" stroke-linejoin="round"><rect x="1486.4" y="54.8" width="7.6" height="5.2"/><path d="M1487.8 54.6v-1.6a2.4 2.4 0 0 1 4.8 0v1.6"/></g><circle cx="1535.4" cy="41.4" r="10.8" fill="none" stroke="#2e2e2e" stroke-width="1.7"/><path d="M1543.2 48.8l8.8 8.8 2.4-2.4-8.8-8.8" fill="none" stroke="#3cb7ee" stroke-width="1.5" stroke-linejoin="miter"/><circle cx="1586.4" cy="44.4" r="8" fill="none" stroke="#2e2e2e" stroke-width="1.7"/><path d="M1599.10 44.40L1601.60 44.40M1595.38 53.38L1597.15 55.15M1586.40 57.10L1586.40 59.60M1577.42 53.38L1575.65 55.15M1573.70 44.40L1571.20 44.40M1577.42 35.42L1575.65 33.65M1586.40 31.70L1586.40 29.20M1595.38 35.42L1597.15 33.65" stroke="#3cb7ee" stroke-width="1.6" stroke-linecap="round" fill="none"/><g fill="none" stroke="#2e2e2e" stroke-width="1.7" stroke-linecap="round" stroke-linejoin="round"><path d="M1627 30h15M1630.3 30.5l-2.8 17.7M1639.5 30.5l2.8 17.7M1621.5 48.4h26"/></g><path d="M1634.8 51.3v7.5" stroke="#3cb7ee" stroke-width="1.6" stroke-linecap="round"/><rect x="1667.4" y="31.3" width="29" height="25.2" fill="none" stroke="#474747" stroke-width="1.6"/><path d="M1676 32v24" stroke="#3cb7ee" stroke-width="1.8"/><rect x="1715.6" y="30" width="30" height="28.4" rx="3" fill="none" stroke="#3a3a3a" stroke-width="1.7"/><rect x="1744" y="5" width="6" height="80" fill="#f0f0f0"/><path d="M1744.5 5v79" stroke="#cfcfcf" stroke-width="1"/><text x="1721.8" y="53.2" font-family="Liberation Sans" font-size="24.5" fill="#3cb7ee">B</text><path d="M12.7 113v-9.2h4.4l1 1.7h6.5v1.7" fill="none" stroke="#3cb7ee" stroke-width="1.4" transform="translate(0 0)"/><path d="M15 109.6h12l-2.8 7.4H13.6z" fill="none" stroke="#333" stroke-width="1.4" stroke-linejoin="round" transform="translate(0 0)"/><path d="M34.9 149.6l7.2 4.4-7.2 4.3-7.2-4.3z" fill="none" stroke="#333" stroke-width="1.3" stroke-linejoin="round" transform="translate(0 0)"/><path d="M28 157l6.9 4.3 6.9-4.3" fill="none" stroke="#3cb7ee" stroke-width="1.5" transform="translate(0 0)"/><path d="M34.9 149.6l7.2 4.4-7.2 4.3-7.2-4.3z" fill="none" stroke="#333" stroke-width="1.3" stroke-linejoin="round" transform="translate(0 45)"/><path d="M28 157l6.9 4.3 6.9-4.3" fill="none" stroke="#3cb7ee" stroke-width="1.5" transform="translate(0 45)"/><path d="M34.9 149.6l7.2 4.4-7.2 4.3-7.2-4.3z" fill="none" stroke="#333" stroke-width="1.3" stroke-linejoin="round" transform="translate(0 90)"/><path d="M28 157l6.9 4.3 6.9-4.3" fill="none" stroke="#3cb7ee" stroke-width="1.5" transform="translate(0 90)"/><path d="M34.9 149.6l7.2 4.4-7.2 4.3-7.2-4.3z" fill="none" stroke="#333" stroke-width="1.3" stroke-linejoin="round" transform="translate(0 135)"/><path d="M28 157l6.9 4.3 6.9-4.3" fill="none" stroke="#3cb7ee" stroke-width="1.5" transform="translate(0 135)"/><path d="M34.9 149.6l7.2 4.4-7.2 4.3-7.2-4.3z" fill="none" stroke="#333" stroke-width="1.3" stroke-linejoin="round" transform="translate(0 180)"/><path d="M28 157l6.9 4.3 6.9-4.3" fill="none" stroke="#3cb7ee" stroke-width="1.5" transform="translate(0 180)"/><path d="M34.9 149.6l7.2 4.4-7.2 4.3-7.2-4.3z" fill="none" stroke="#333" stroke-width="1.3" stroke-linejoin="round" transform="translate(0 225)"/><path d="M28 157l6.9 4.3 6.9-4.3" fill="none" stroke="#3cb7ee" stroke-width="1.5" transform="translate(0 225)"/><path d="M34.9 149.6l7.2 4.4-7.2 4.3-7.2-4.3z" fill="none" stroke="#333" stroke-width="1.3" stroke-linejoin="round" transform="translate(0 270)"/><path d="M28 157l6.9 4.3 6.9-4.3" fill="none" stroke="#3cb7ee" stroke-width="1.5" transform="translate(0 270)"/><path d="M34.9 149.6l7.2 4.4-7.2 4.3-7.2-4.3z" fill="none" stroke="#333" stroke-width="1.3" stroke-linejoin="round" transform="translate(0 315)"/><path d="M28 157l6.9 4.3 6.9-4.3" fill="none" stroke="#3cb7ee" stroke-width="1.5" transform="translate(0 315)"/><path d="M12.7 113v-9.2h4.4l1 1.7h6.5v1.7" fill="none" stroke="#3cb7ee" stroke-width="1.4" transform="translate(0 405)"/><path d="M15 109.6h12l-2.8 7.4H13.6z" fill="none" stroke="#333" stroke-width="1.4" stroke-linejoin="round" transform="translate(0 405)"/><path d="M34.9 149.6l7.2 4.4-7.2 4.3-7.2-4.3z" fill="none" stroke="#333" stroke-width="1.3" stroke-linejoin="round" transform="translate(0 405)"/><path d="M28 157l6.9 4.3 6.9-4.3" fill="none" stroke="#3cb7ee" stroke-width="1.5" transform="translate(0 405)"/><path d="M34.9 149.6l7.2 4.4-7.2 4.3-7.2-4.3z" fill="none" stroke="#333" stroke-width="1.3" stroke-linejoin="round" transform="translate(0 450)"/><path d="M28 157l6.9 4.3 6.9-4.3" fill="none" stroke="#3cb7ee" stroke-width="1.5" transform="translate(0 450)"/><path d="M12.7 113v-9.2h4.4l1 1.7h6.5v1.7" fill="none" stroke="#3cb7ee" stroke-width="1.4" transform="translate(0 540)"/><path d="M15 109.6h12l-2.8 7.4H13.6z" fill="none" stroke="#333" stroke-width="1.4" stroke-linejoin="round" transform="translate(0 540)"/><path d="M34.9 149.6l7.2 4.4-7.2 4.3-7.2-4.3z" fill="none" stroke="#333" stroke-width="1.3" stroke-linejoin="round" transform="translate(0 540)"/><path d="M28 157l6.9 4.3 6.9-4.3" fill="none" stroke="#3cb7ee" stroke-width="1.5" transform="translate(0 540)"/><path d="M34.9 149.6l7.2 4.4-7.2 4.3-7.2-4.3z" fill="none" stroke="#333" stroke-width="1.3" stroke-linejoin="round" transform="translate(0 585)"/><path d="M28 157l6.9 4.3 6.9-4.3" fill="none" stroke="#3cb7ee" stroke-width="1.5" transform="translate(0 585)"/><path d="M34.9 149.6l7.2 4.4-7.2 4.3-7.2-4.3z" fill="none" stroke="#333" stroke-width="1.3" stroke-linejoin="round" transform="translate(0 630)"/><path d="M28 157l6.9 4.3 6.9-4.3" fill="none" stroke="#3cb7ee" stroke-width="1.5" transform="translate(0 630)"/><path d="M12.7 113v-9.2h4.4l1 1.7h6.5v1.7" fill="none" stroke="#3cb7ee" stroke-width="1.4" transform="translate(0 720)"/><path d="M15 109.6h12l-2.8 7.4H13.6z" fill="none" stroke="#333" stroke-width="1.4" stroke-linejoin="round" transform="translate(0 720)"/><path d="M34.9 149.6l7.2 4.4-7.2 4.3-7.2-4.3z" fill="none" stroke="#333" stroke-width="1.3" stroke-linejoin="round" transform="translate(0 720)"/><path d="M28 157l6.9 4.3 6.9-4.3" fill="none" stroke="#3cb7ee" stroke-width="1.5" transform="translate(0 720)"/><path d="M34.9 149.6l7.2 4.4-7.2 4.3-7.2-4.3z" fill="none" stroke="#333" stroke-width="1.3" stroke-linejoin="round" transform="translate(0 765)"/><path d="M28 157l6.9 4.3 6.9-4.3" fill="none" stroke="#3cb7ee" stroke-width="1.5" transform="translate(0 765)"/><path d="M316 99.6h6.4v11.7h-9v-9.1z" fill="#fff" stroke="#333" stroke-width="1.2" stroke-linejoin="round"/><path d="M573.5 101.2l9 8.5M582.5 101.2l-9 8.5" stroke="#000" stroke-width="1.5"/><rect x="1728.5" y="102.3" width="11" height="8" fill="#fff" stroke="#000" stroke-width="1.2"/><path d="M1728.5 103.4h11" stroke="#000" stroke-width="2.2"/><circle cx="315.5" cy="128.4" r="4.3" fill="none" stroke="#a0a0a0" stroke-width="1"/><path d="M313 128.4h5" stroke="#a0a0a0" stroke-width="1"/><path d="M316 213.9l2.6 3.8 5.3-7.6" fill="none" stroke="#4a9fe6" stroke-width="1.8" stroke-linecap="round" stroke-linejoin="round"/><path d="M316 244.9l2.6 3.8 5.3-7.6" fill="none" stroke="#4a9fe6" stroke-width="1.8" stroke-linecap="round" stroke-linejoin="round"/><path d="M316 275.9l2.6 3.8 5.3-7.6" fill="none" stroke="#4a9fe6" stroke-width="1.8" stroke-linecap="round" stroke-linejoin="round"/><path d="M316 306.9l2.6 3.8 5.3-7.6" fill="none" stroke="#4a9fe6" stroke-width="1.8" stroke-linecap="round" stroke-linejoin="round"/><path d="M316 337.9l2.6 3.8 5.3-7.6" fill="none" stroke="#4a9fe6" stroke-width="1.8" stroke-linecap="round" stroke-linejoin="round"/><path d="M316 368.9l2.6 3.8 5.3-7.6" fill="none" stroke="#4a9fe6" stroke-width="1.8" stroke-linecap="round" stroke-linejoin="round"/><path d="M316 399.9l2.6 3.8 5.3-7.6" fill="none" stroke="#4a9fe6" stroke-width="1.8" stroke-linecap="round" stroke-linejoin="round"/><path d="M316 430.9l2.6 3.8 5.3-7.6" fill="none" stroke="#4a9fe6" stroke-width="1.8" stroke-linecap="round" stroke-linejoin="round"/><path d="M316 461.9l2.6 3.8 5.3-7.6" fill="none" stroke="#4a9fe6" stroke-width="1.8" stroke-linecap="round" stroke-linejoin="round"/><path d="M316 492.9l2.6 3.8 5.3-7.6" fill="none" stroke="#4a9fe6" stroke-width="1.8" stroke-linecap="round" stroke-linejoin="round"/><g transform="translate(0 0)"><rect x="316.5" y="514.5" width="15" height="15" rx="1" fill="none" stroke="#222" stroke-width="1.2"/><path d="M321.6 515.2v13.6M326.6 515.2v13.6M317.2 519.5h13.6M317.2 524.5h13.6" stroke="#3cb7ee" stroke-width="1.1"/><path d="M355.5 516.3h15M359.5 524.5h7" stroke="#222" stroke-width="1.2"/><path d="M357.5 520.5h11M361.5 528.5h3.5" stroke="#3cb7ee" stroke-width="1.2"/><path d="M407.33 520.45L409.12 520.73L409.12 522.87L407.33 523.15L406.72 524.62L407.79 526.08L406.28 527.59L404.82 526.52L403.35 527.13L403.07 528.92L400.93 528.92L400.65 527.13L399.18 526.52L397.72 527.59L396.21 526.08L397.28 524.62L396.67 523.15L394.88 522.87L394.88 520.73L396.67 520.45L397.28 518.98L396.21 517.52L397.72 516.01L399.18 517.08L400.65 516.47L400.93 514.68L403.07 514.68L403.35 516.47L404.82 517.08L406.28 516.01L407.79 517.52L406.72 518.98Z" fill="none" stroke="#222" stroke-width="1.2" stroke-linejoin="round"/><circle cx="402" cy="521.8" r="2.4" fill="none" stroke="#3cb7ee" stroke-width="1.3"/><path d="M439.4 516.2h9.2M439.4 522.4h9.2M439.4 528.4h9.2" stroke="#222" stroke-width="1.2"/><path d="M434.5 514.3l1-.8v4.2M434 520.5h2v1.5l-2 2h2M434 526.5h2l-1 1.5 1 .5v1.2h-2" stroke="#3cb7ee" stroke-width="0.9" fill="none"/><path d="M465.4 515.6h15.1M465.4 519.4h15.1M465.4 523.3h6M465.4 527.3h6" stroke="#222" stroke-width="1.2"/><path d="M474.5 525.6h6M477.5 522.6v6" stroke="#3cb7ee" stroke-width="1.2"/><path d="M510.5 517.4h-5.2a.8.8 0 0 0-.8.8v10a.8.8 0 0 0 .8.8h10.4a.8.8 0 0 0 .8-.8v-4.6" fill="none" stroke="#333" stroke-width="1.3"/><path d="M511.5 522.5l8-8M515 514.5h4.5v4.5" fill="none" stroke="#3cb7ee" stroke-width="1.3"/><path d="M543.7 526.5v-9.1h9.3M550.8 515.2l2.2 2.2-2.2 2.2" fill="none" stroke="#222" stroke-width="1.2"/><path d="M556.9 517.4v9.1h-8.4M550.8 524.3l-2.2 2.2 2.2 2.2" fill="none" stroke="#3cb7ee" stroke-width="1.2"/></g><g transform="translate(-1 365)"><rect x="316.5" y="514.5" width="15" height="15" rx="1" fill="none" stroke="#222" stroke-width="1.2"/><path d="M321.6 515.2v13.6M326.6 515.2v13.6M317.2 519.5h13.6M317.2 524.5h13.6" stroke="#3cb7ee" stroke-width="1.1"/><path d="M355.5 516.3h15M359.5 524.5h7" stroke="#222" stroke-width="1.2"/><path d="M357.5 520.5h11M361.5 528.5h3.5" stroke="#3cb7ee" stroke-width="1.2"/><path d="M407.33 520.45L409.12 520.73L409.12 522.87L407.33 523.15L406.72 524.62L407.79 526.08L406.28 527.59L404.82 526.52L403.35 527.13L403.07 528.92L400.93 528.92L400.65 527.13L399.18 526.52L397.72 527.59L396.21 526.08L397.28 524.62L396.67 523.15L394.88 522.87L394.88 520.73L396.67 520.45L397.28 518.98L396.21 517.52L397.72 516.01L399.18 517.08L400.65 516.47L400.93 514.68L403.07 514.68L403.35 516.47L404.82 517.08L406.28 516.01L407.79 517.52L406.72 518.98Z" fill="none" stroke="#222" stroke-width="1.2" stroke-linejoin="round"/><circle cx="402" cy="521.8" r="2.4" fill="none" stroke="#3cb7ee" stroke-width="1.3"/><path d="M439.4 516.2h9.2M439.4 522.4h9.2M439.4 528.4h9.2" stroke="#222" stroke-width="1.2"/><path d="M434.5 514.3l1-.8v4.2M434 520.5h2v1.5l-2 2h2M434 526.5h2l-1 1.5 1 .5v1.2h-2" stroke="#3cb7ee" stroke-width="0.9" fill="none"/><path d="M465.4 515.6h15.1M465.4 519.4h15.1M465.4 523.3h6M465.4 527.3h6" stroke="#222" stroke-width="1.2"/><path d="M474.5 525.6h6M477.5 522.6v6" stroke="#3cb7ee" stroke-width="1.2"/><path d="M510.5 517.4h-5.2a.8.8 0 0 0-.8.8v10a.8.8 0 0 0 .8.8h10.4a.8.8 0 0 0 .8-.8v-4.6" fill="none" stroke="#333" stroke-width="1.3"/><path d="M511.5 522.5l8-8M515 514.5h4.5v4.5" fill="none" stroke="#3cb7ee" stroke-width="1.3"/><path d="M543.7 526.5v-9.1h9.3M550.8 515.2l2.2 2.2-2.2 2.2" fill="none" stroke="#222" stroke-width="1.2"/><path d="M556.9 517.4v9.1h-8.4M550.8 524.3l-2.2 2.2 2.2 2.2" fill="none" stroke="#3cb7ee" stroke-width="1.2"/></g><path d="M1214 521.9h10M1219 516.9v10" stroke="#555" stroke-width="1.5"/><path d="M1342.5 525.3l1-3 6.2-6.2 2 2-6.2 6.2z" fill="none" stroke="#222" stroke-width="1.1" stroke-linejoin="round"/><path d="M1341.5 527.1h10.5" stroke="#3cb7ee" stroke-width="1.2"/><path d="M1513 521.5h10" stroke="#555" stroke-width="1.5"/><path d="M314.8 921.2h-5a1 1 0 0 0-1 1v10.3a1 1 0 0 0 1 1h10.5a1 1 0 0 0 1-1v-5.3" fill="none" stroke="#333" stroke-width="1.4"/><path d="M314.5 927.5l1-2.3 6-6 1.6 1.6-6 6z" fill="none" stroke="#3cb7ee" stroke-width="1.3"/><path d="M1610.5 924.5a5.5 5 0 0 1 9.5-2" fill="none" stroke="#222" stroke-width="1.2"/><path d="M1621 920.3v4.6h-4.5z" fill="#222"/><path d="M1619.5 927.5a5.5 5 0 0 1-9.5 2" fill="none" stroke="#3cb7ee" stroke-width="1.2"/><path d="M1609 931.5v-4.6h4.5z" fill="#3cb7ee"/><path d="M1644.5 921.3l9 9.4M1653.5 921.3l-9 9.4" stroke="#222" stroke-width="1.4"/></svg>
</body></html>
